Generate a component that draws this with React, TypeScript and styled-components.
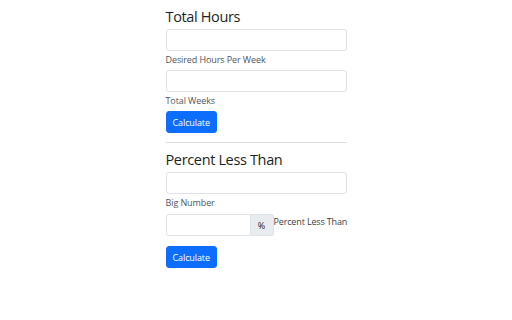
import React from "react";
import styled, { createGlobalStyle } from "styled-components";

const GlobalStyle = createGlobalStyle`
  html, body {
    margin: 0;
    padding: 0;
    background: #ffffff;
  }
  body {
    font-family: "Open Sans", "Noto Sans", sans-serif;
    color: #212529;
  }
`;

const Column = styled.main`
  width: 181px;
  margin: 0 auto;
  padding-top: 8px;
`;

const Section = styled.section`
  display: flex;
  flex-direction: column;
  align-items: flex-start;
`;

const Heading = styled.h4`
  margin: 0 0 3px;
  font-size: 14.5px;
  font-weight: 500;
  letter-spacing: -0.35px;
  line-height: 18px;
  color: #1c1f23;
`;

const Input = styled.input<{ $width?: number }>`
  box-sizing: border-box;
  width: ${(p) => (p.$width ? `${p.$width}px` : "100%")};
  height: 22px;
  padding: 0 6px;
  border: 1px solid #dee2e6;
  border-radius: 3px;
  font: inherit;
  font-size: 9px;
  outline: none;
  background: #fff;
`;

const Help = styled.div`
  margin: 2px 0 4px;
  font-size: 9px;
  letter-spacing: -0.1px;
  line-height: 13px;
  color: #50565c;
`;

const Button = styled.button`
  box-sizing: border-box;
  height: 22px;
  padding: 0 6px;
  border: 1px solid #0d6efd;
  border-radius: 3px;
  background: #0d6efd;
  color: #ffffff;
  font-family: inherit;
  font-size: 9px;
  letter-spacing: -0.1px;
  cursor: pointer;
`;

const Divider = styled.hr`
  width: 100%;
  margin: 9px 0 8px;
  border: 0;
  border-top: 1px solid #dcdfe2;
`;

const GroupRow = styled.div`
  display: flex;
  align-items: flex-start;
  width: 100%;
  margin: 1px 0 10px;
`;

const InputGroup = styled.div`
  display: flex;
  flex: none;

  input {
    border-top-right-radius: 0;
    border-bottom-right-radius: 0;
  }
`;

const Addon = styled.span`
  box-sizing: border-box;
  display: flex;
  align-items: center;
  justify-content: center;
  width: 23px;
  height: 22px;
  border: 1px solid #dee2e6;
  border-left: 0;
  border-radius: 0 3px 3px 0;
  background: #e9ecef;
  font-size: 9px;
  color: #212529;
`;

const InlineLabel = styled.span`
  font-size: 9px;
  letter-spacing: -0.15px;
  line-height: 13px;
  margin-top: 1px;
  color: #3a3f44;
  white-space: nowrap;
`;

export default function App() {
  return (
    <>
      <GlobalStyle />
      <Column>
        <Section>
          <Heading>Total Hours</Heading>
          <Input type="text" />
          <Help>Desired Hours Per Week</Help>
          <Input type="text" />
          <Help>Total Weeks</Help>
          <Button type="button">Calculate</Button>
        </Section>
        <Divider />
        <Section>
          <Heading>Percent Less Than</Heading>
          <Input type="text" />
          <Help>Big Number</Help>
          <GroupRow>
            <InputGroup>
              <Input type="text" $width={85} />
              <Addon>%</Addon>
            </InputGroup>
            <InlineLabel>Percent Less Than</InlineLabel>
          </GroupRow>
          <Button type="button">Calculate</Button>
        </Section>
      </Column>
    </>
  );
}
